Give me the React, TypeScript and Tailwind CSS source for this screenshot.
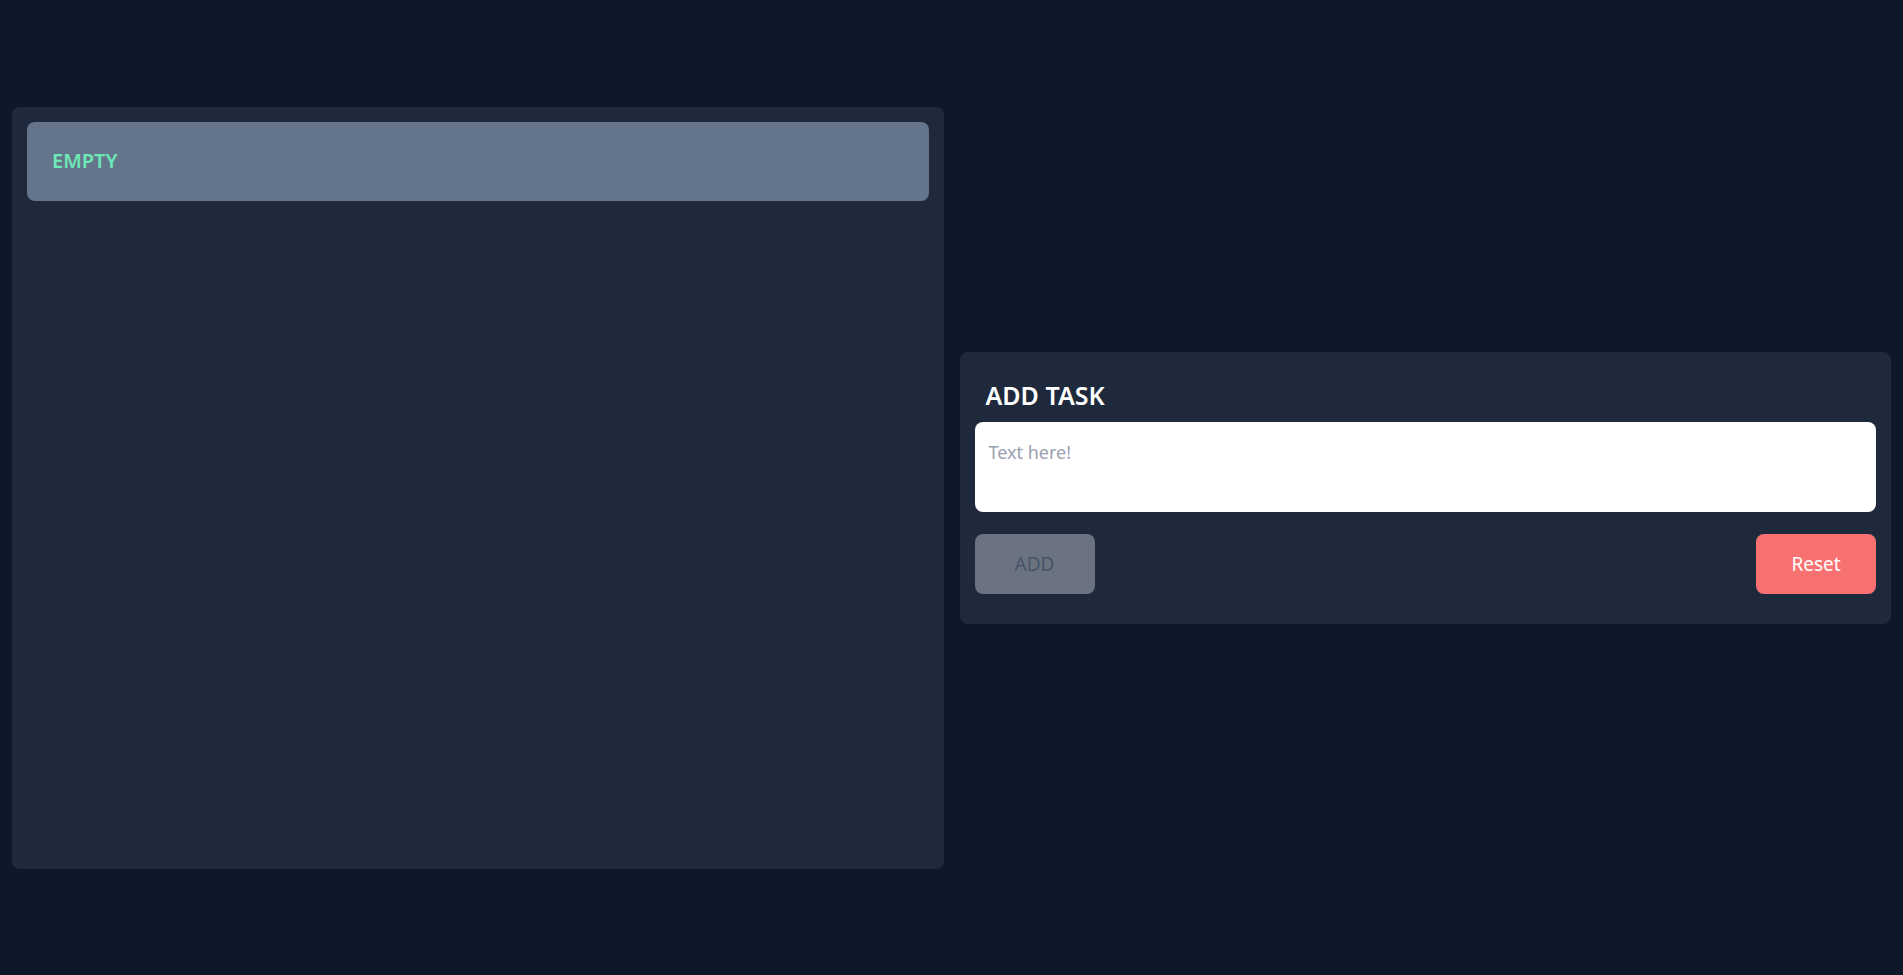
export default function App() {
  return (
    <div
      className="grid h-screen grid-cols-2 items-center gap-4 bg-[#0f172a] px-3"
      style={{ fontFamily: '"Noto Sans", "Open Sans", sans-serif' }}
    >
      <div className="h-[762px] rounded-lg bg-[#1e293b] p-[15px]">
        <div className="flex h-[79px] items-center rounded-lg bg-[#64748b] px-[25px]">
          <span className="text-[20px] font-semibold text-[#6ee7b7]">EMPTY</span>
        </div>
      </div>

      <div className="rounded-lg bg-[#1e293b] px-[15px] pt-[27px] pb-[30px]">
        <h2 className="mb-[11px] px-[11px] text-[25px] leading-8 font-semibold text-white">
          ADD TASK
        </h2>
        <textarea
          placeholder="Text here!"
          className="block h-[90px] w-full resize-none rounded-lg bg-white px-[14px] pt-4 pb-3 text-[18px] leading-7 text-gray-800 outline-none placeholder:text-gray-400"
        />
        <div className="mt-[22px] flex justify-between">
          <button className="h-[60px] w-[120px] rounded-lg bg-[#6b7280] pt-0.5 text-[19px] text-[#475569]">
            ADD
          </button>
          <button className="h-[60px] w-[120px] rounded-lg bg-[#f87171] pt-0.5 text-[19px] text-white">
            Reset
          </button>
        </div>
      </div>
    </div>
  );
}
